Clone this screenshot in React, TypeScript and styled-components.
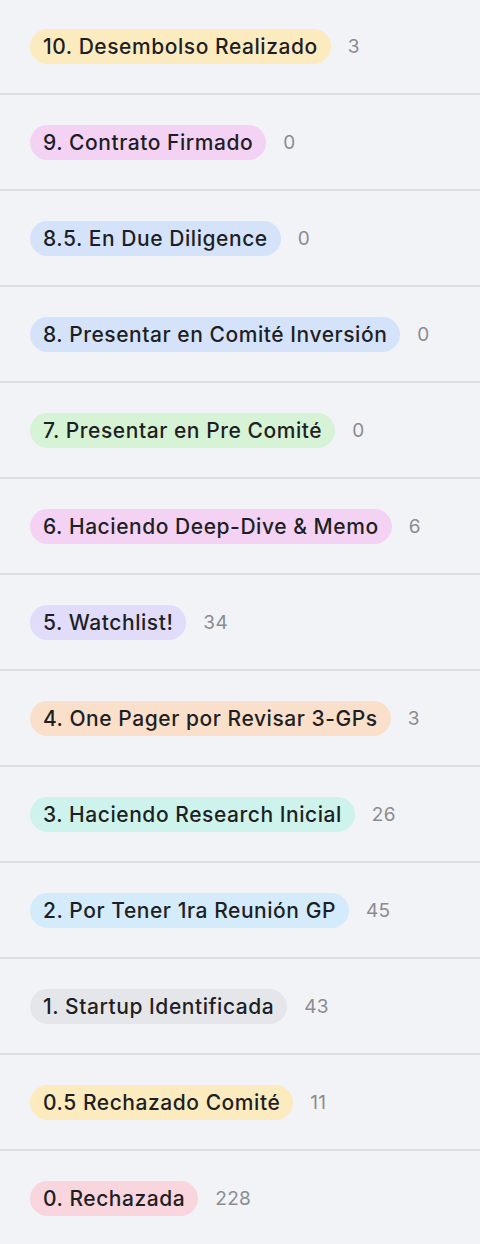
import styled, { createGlobalStyle } from "styled-components";

const GlobalStyle = createGlobalStyle`
  html, body {
    margin: 0;
    padding: 0;
    background: #f2f3f7;
  }
  body {
    font-family: Inter, "Noto Sans", "Liberation Sans", sans-serif;
    -webkit-font-smoothing: antialiased;
  }
`;

interface Stage {
  label: string;
  count: number;
  color: string;
}

const stages: Stage[] = [
  { label: "10. Desembolso Realizado", count: 3, color: "#fcebbf" },
  { label: "9. Contrato Firmado", count: 0, color: "#f4d2f3" },
  { label: "8.5. En Due Diligence", count: 0, color: "#d5e3fa" },
  { label: "8. Presentar en Comité Inversión", count: 0, color: "#d5e3fa" },
  { label: "7. Presentar en Pre Comité", count: 0, color: "#d6f3d6" },
  { label: "6. Haciendo Deep-Dive & Memo", count: 6, color: "#f4d2f3" },
  { label: "5. Watchlist!", count: 34, color: "#e1dcf9" },
  { label: "4. One Pager por Revisar 3-GPs", count: 3, color: "#fadfcb" },
  { label: "3. Haciendo Research Inicial", count: 26, color: "#cdf3ec" },
  { label: "2. Por Tener 1ra Reunión GP", count: 45, color: "#d3ebfb" },
  { label: "1. Startup Identificada", count: 43, color: "#e5e6ea" },
  { label: "0.5 Rechazado Comité", count: 11, color: "#fcebbf" },
  { label: "0. Rechazada", count: 228, color: "#f9d5de" },
];

const List = styled.ul`
  list-style: none;
  margin: 0;
  padding: 0;
  width: 480px;
`;

const Row = styled.li`
  display: flex;
  align-items: center;
  gap: 17px;
  height: 96px;
  padding: 0 30px;
  box-sizing: border-box;
  border-bottom: 2px solid #dcdde2;
  &:first-child {
    height: 95px;
  }
`;

const Pill = styled.span<{ $bg: string }>`
  display: inline-flex;
  align-items: center;
  height: 35px;
  padding: 0 13px;
  border-radius: 18px;
  background: ${(p) => p.$bg};
  color: #1e1f24;
  font-size: 21px;
  font-weight: 450;
  letter-spacing: 0.55px;
  white-space: nowrap;
`;

const Count = styled.span`
  color: #8b8b90;
  font-size: 19px;
  font-weight: 400;
  letter-spacing: 0.3px;
`;

const App = () => {
  return (
    <>
      <GlobalStyle />
      <List>
        {stages.map((s) => (
          <Row key={s.label}>
            <Pill $bg={s.color}>{s.label}</Pill>
            <Count>{s.count}</Count>
          </Row>
        ))}
      </List>
    </>
  );
};

export default App;
